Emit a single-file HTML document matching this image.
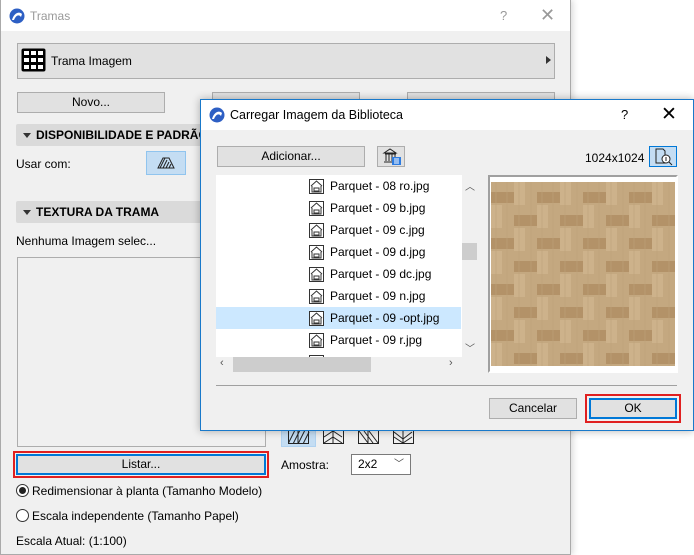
<!DOCTYPE html>
<html><head><meta charset="utf-8"><style>
*{margin:0;padding:0;box-sizing:border-box}
body{width:694px;height:555px;background:#fff;position:relative;overflow:hidden;font-family:"Liberation Sans",sans-serif;font-size:12px;color:#000}
.a{position:absolute}
.btn{position:absolute;background:#e1e1e1;border:1px solid #adadad;text-align:center;line-height:18px}
.hdr{position:absolute;background:#dadada;font-weight:bold;font-size:12px;line-height:22px;padding-left:20px;border-radius:2px}
.hdr:before{content:"";position:absolute;left:7px;top:9px;border-left:4px solid transparent;border-right:4px solid transparent;border-top:5px solid #333}
.row{position:absolute;left:0;width:245px;height:22px;line-height:22px}
.row svg{position:absolute;left:93px;top:4px}
.row span{position:absolute;left:114px}
</style></head><body>
<!-- main window -->
<div class="a" style="left:0;top:0;width:571px;height:555px;background:#f0f0f0;border:1px solid #aaa;border-top:none;box-shadow:2px 0 6px rgba(0,0,0,.15)"></div>
<div class="a" style="left:1;top:0;left:1px;width:569px;height:31px;background:#fff"></div>
<svg class="a" style="left:9px;top:8px" width="16" height="16" viewBox="0 0 16 16"><circle cx="8" cy="8" r="7.5" fill="#2d5fc4"/><path d="M3 12 C5 5 10 3 13 6 L12 9 C10 6 7 7 5 12Z" fill="#fff"/></svg>
<div class="a" style="left:30px;top:9px;color:#999;font-size:12px">Tramas</div>
<div class="a" style="left:500px;top:8px;color:#999;font-size:13px">?</div>
<div class="a" style="left:540px;top:5px;color:#999;font-size:18px">✕</div>
<div class="btn" style="left:17px;top:43px;width:538px;height:36px;text-align:left;padding-left:33px;line-height:34px">Trama Imagem</div>
<svg class="a" style="left:21px;top:48px" width="25" height="24" viewBox="0 0 25 24"><rect x="0.5" y="0.5" width="24" height="23" fill="#000" rx="2"/><g fill="#fff"><rect x="3" y="3" width="5" height="4"/><rect x="10" y="3" width="5" height="4"/><rect x="17" y="3" width="5" height="4"/><rect x="3" y="10" width="5" height="4"/><rect x="10" y="10" width="5" height="4"/><rect x="17" y="10" width="5" height="4"/><rect x="3" y="17" width="5" height="4"/><rect x="10" y="17" width="5" height="4"/><rect x="17" y="17" width="5" height="4"/></g></svg>
<div class="a" style="left:546px;top:56px;border-top:4px solid transparent;border-bottom:4px solid transparent;border-left:5px solid #333"></div>
<div class="btn" style="left:17px;top:92px;width:148px;height:21px">Novo...</div>
<div class="btn" style="left:212px;top:92px;width:148px;height:21px"></div>
<div class="btn" style="left:407px;top:92px;width:148px;height:21px"></div>
<div class="hdr" style="left:16px;top:124px;width:538px">DISPONIBILIDADE E PADRÃO AF</div>
<div class="a" style="left:16px;top:157px">Usar com:</div>
<div class="a" style="left:146px;top:151px;width:40px;height:24px;background:#c4ddf3;border:1px solid #90c4ee"></div>
<svg class="a" style="left:157px;top:157px" width="18" height="12" viewBox="0 0 18 12"><path d="M1 11 L6 1 L12 1 L17 11Z" fill="none" stroke="#222"/><path d="M3 11L8 1M6 11L10 3M9 11L12 5M12 11L14 7" stroke="#222"/></svg>
<div class="hdr" style="left:16px;top:201px;width:538px">TEXTURA DA TRAMA</div>
<div class="a" style="left:16px;top:234px">Nenhuma Imagem selec...</div>
<div class="a" style="left:17px;top:257px;width:249px;height:190px;border:1px solid #adadad;background:#f0f0f0"></div>
<div class="a" style="left:13px;top:451px;width:256px;height:27px;border:2px solid #e02020"></div>
<div class="btn" style="left:16px;top:454px;width:250px;height:21px;border:2px solid #0078d7;line-height:17px">Listar...</div>
<div class="a" style="left:16px;top:484px;width:13px;height:13px;border:1px solid #333;border-radius:50%;background:#fff"></div>
<div class="a" style="left:19px;top:487px;width:7px;height:7px;border-radius:50%;background:#222"></div>
<div class="a" style="left:32px;top:484px">Redimensionar à planta (Tamanho Modelo)</div>
<div class="a" style="left:16px;top:509px;width:13px;height:13px;border:1px solid #333;border-radius:50%;background:#fff"></div>
<div class="a" style="left:32px;top:509px">Escala independente (Tamanho Papel)</div>
<div class="a" style="left:16px;top:534px">Escala Atual: (1:100)</div>
<div class="a" style="left:281px;top:426px;width:35px;height:21px;background:#c4ddf3;border:1px solid #b0d2f0"></div>
<svg class="a" style="left:288px;top:430px" width="130" height="14" viewBox="0 0 130 14"><g fill="none" stroke="#222"><rect x="0.5" y="0.5" width="20" height="13"/><path d="M0 14L7 0M5 14L12 0M10 14L17 0M15 14L21 2M10 0V14"/><rect x="35.5" y="0.5" width="20" height="13"/><path d="M36 7L45 1L54 7M36 13L45 7L54 13M45 0V14"/><rect x="70.5" y="0.5" width="20" height="13"/><path d="M71 1L80 13M76 1L85 13M81 1L90 13M80 0V14"/><rect x="105.5" y="0.5" width="20" height="13"/><path d="M106 2L115 9L124 2M106 7L115 13L124 7M115 0V14"/></g></svg>
<div class="a" style="left:281px;top:458px">Amostra:</div>
<div class="a" style="left:351px;top:454px;width:60px;height:21px;background:#fff;border:1px solid #7a7a7a;padding-left:6px;line-height:19px">2x2<span style="position:absolute;right:6px;top:0;font-size:10px;color:#444">﹀</span></div>

<!-- dialog -->
<div class="a" style="left:200px;top:99px;width:494px;height:332px;background:#f0f0f0;border:1px solid #1979ca;box-shadow:0 0 8px rgba(0,0,0,.3)"></div>
<div class="a" style="left:201px;top:100px;width:492px;height:30px;background:#fff"></div>
<svg class="a" style="left:209px;top:107px" width="16" height="16" viewBox="0 0 16 16"><circle cx="8" cy="8" r="7.5" fill="#2d5fc4"/><path d="M3 12 C5 5 10 3 13 6 L12 9 C10 6 7 7 5 12Z" fill="#fff"/></svg>
<div class="a" style="left:230px;top:108px;font-size:12.5px">Carregar Imagem da Biblioteca</div>
<div class="a" style="left:621px;top:107px;font-size:13px">?</div>
<div class="a" style="left:661px;top:103px;font-size:19px">✕</div>
<div class="btn" style="left:217px;top:146px;width:148px;height:21px">Adicionar...</div>
<div class="btn" style="left:377px;top:146px;width:28px;height:21px"></div>
<svg class="a" style="left:382px;top:148px" width="20" height="18" viewBox="0 0 20 18"><path d="M2 5L8 1L14 5ZM3 6h11M4 6v7M7 6v7M10 6v7M13 6v7M2 14h12" fill="none" stroke="#222"/><rect x="10" y="9" width="9" height="8" fill="#2d7be0"/><path d="M12 11h5M12 13h5M12 15h5" stroke="#fff"/></svg>
<div class="a" style="left:585px;top:151px">1024x1024</div>
<div class="a" style="left:649px;top:146px;width:28px;height:21px;background:#c4ddf3;border:1px solid #0078d7"></div>
<svg class="a" style="left:654px;top:148px" width="20" height="18" viewBox="0 0 20 18"><path d="M2 1h7l2 2v12H2Z" fill="none" stroke="#222"/><circle cx="12" cy="11" r="4" fill="#fff" stroke="#222"/><path d="M15 14l3 3M12 9v4" stroke="#222"/></svg>
<div class="a" style="left:216px;top:175px;width:246px;height:182px;background:#fff;overflow:hidden">
<div class="row" style="top:0"><svg width="15" height="15" viewBox="0 0 15 15"><rect x=".5" y=".5" width="14" height="14" fill="#fff" stroke="#333"/><path d="M2 7L7.5 2L13 7M3 7v6h9V7M5 9h5v3H5z" fill="none" stroke="#333"/></svg><span>Parquet - 08 ro.jpg</span></div>
<div class="row" style="top:22px"><svg width="15" height="15" viewBox="0 0 15 15"><rect x=".5" y=".5" width="14" height="14" fill="#fff" stroke="#333"/><path d="M2 7L7.5 2L13 7M3 7v6h9V7M5 9h5v3H5z" fill="none" stroke="#333"/></svg><span>Parquet - 09 b.jpg</span></div>
<div class="row" style="top:44px"><svg width="15" height="15" viewBox="0 0 15 15"><rect x=".5" y=".5" width="14" height="14" fill="#fff" stroke="#333"/><path d="M2 7L7.5 2L13 7M3 7v6h9V7M5 9h5v3H5z" fill="none" stroke="#333"/></svg><span>Parquet - 09 c.jpg</span></div>
<div class="row" style="top:66px"><svg width="15" height="15" viewBox="0 0 15 15"><rect x=".5" y=".5" width="14" height="14" fill="#fff" stroke="#333"/><path d="M2 7L7.5 2L13 7M3 7v6h9V7M5 9h5v3H5z" fill="none" stroke="#333"/></svg><span>Parquet - 09 d.jpg</span></div>
<div class="row" style="top:88px"><svg width="15" height="15" viewBox="0 0 15 15"><rect x=".5" y=".5" width="14" height="14" fill="#fff" stroke="#333"/><path d="M2 7L7.5 2L13 7M3 7v6h9V7M5 9h5v3H5z" fill="none" stroke="#333"/></svg><span>Parquet - 09 dc.jpg</span></div>
<div class="row" style="top:110px"><svg width="15" height="15" viewBox="0 0 15 15"><rect x=".5" y=".5" width="14" height="14" fill="#fff" stroke="#333"/><path d="M2 7L7.5 2L13 7M3 7v6h9V7M5 9h5v3H5z" fill="none" stroke="#333"/></svg><span>Parquet - 09 n.jpg</span></div>
<div class="row" style="top:132px;background:#cce8ff"><svg width="15" height="15" viewBox="0 0 15 15"><rect x=".5" y=".5" width="14" height="14" fill="#fff" stroke="#333"/><path d="M2 7L7.5 2L13 7M3 7v6h9V7M5 9h5v3H5z" fill="none" stroke="#333"/></svg><span>Parquet - 09 -opt.jpg</span></div>
<div class="row" style="top:154px"><svg width="15" height="15" viewBox="0 0 15 15"><rect x=".5" y=".5" width="14" height="14" fill="#fff" stroke="#333"/><path d="M2 7L7.5 2L13 7M3 7v6h9V7M5 9h5v3H5z" fill="none" stroke="#333"/></svg><span>Parquet - 09 r.jpg</span></div>
<div class="row" style="top:176px"><svg width="15" height="15" viewBox="0 0 15 15"><rect x=".5" y=".5" width="14" height="14" fill="#fff" stroke="#333"/></svg></div>
</div>
<div class="a" style="left:462px;top:175px;width:15px;height:182px;background:#f0f0f0"></div>
<div class="a" style="left:462px;top:243px;width:15px;height:17px;background:#cdcdcd"></div>
<div class="a" style="left:465px;top:178px;font-size:10px;color:#555">︿</div>
<div class="a" style="left:465px;top:340px;font-size:10px;color:#555">﹀</div>
<div class="a" style="left:216px;top:357px;width:246px;height:15px;background:#f0f0f0"></div>
<div class="a" style="left:233px;top:357px;width:138px;height:15px;background:#cdcdcd"></div>
<div class="a" style="left:220px;top:357px;font-size:11px;color:#555">‹</div>
<div class="a" style="left:449px;top:357px;font-size:11px;color:#555">›</div>
<div class="a" style="left:488px;top:175px;width:190px;height:198px;background:#fff;border:2px solid #a0a0a0;border-right-color:#fff;border-bottom-color:#fff"></div>
<svg class="a" style="left:491px;top:182px" width="184" height="184" viewBox="0 0 184 184">
<defs><pattern id="w" width="46" height="46" patternUnits="userSpaceOnUse">
<rect width="46" height="46" fill="#c4a880"/>
<rect x="0" y="10" width="23" height="11" fill="#b39268"/>
<rect x="23" y="33" width="23" height="11" fill="#b39268"/>
<rect x="23" y="0" width="11" height="23" fill="#cdb28b"/>
<rect x="0" y="23" width="11" height="23" fill="#cdb28b"/>
<path d="M5 0v46M16 0v46M28 0v46M40 0v46" stroke="#bfa278" stroke-width="0.6"/>
</pattern></defs><rect width="184" height="184" fill="url(#w)"/></svg>
<div class="a" style="left:216px;top:385px;width:461px;height:1px;background:#a0a0a0"></div>
<div class="btn" style="left:489px;top:398px;width:88px;height:21px">Cancelar</div>
<div class="a" style="left:585px;top:394px;width:96px;height:29px;border:2px solid #e02020"></div>
<div class="btn" style="left:589px;top:398px;width:88px;height:21px;border:2px solid #0078d7;line-height:17px">OK</div>
</body></html>
